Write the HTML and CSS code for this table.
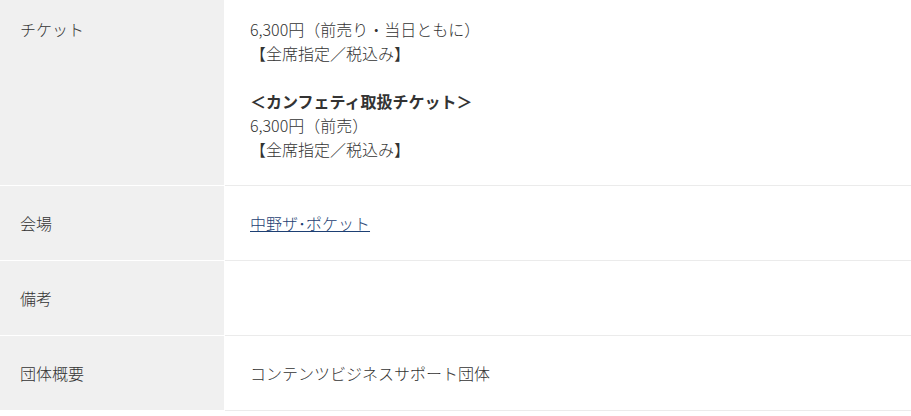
FILE: index.html
```html
<!DOCTYPE html>
<html lang="ja">
<head>
<meta charset="utf-8">
<link rel="stylesheet" href="styles.css">
</head>
<body>
<table class="info">
  <tr class="first">
    <th>チケット</th>
    <td>6,300円（前売り・当日ともに）<br>【全席指定／税込み】<br><br><strong>＜カンフェティ取扱チケット＞</strong><br>6,300円（前売）<br>【全席指定／税込み】</td>
  </tr>
  <tr>
    <th>会場</th>
    <td><a href="#">中野ザ･ポケット</a></td>
  </tr>
  <tr>
    <th>備考</th>
    <td></td>
  </tr>
  <tr>
    <th>団体概要</th>
    <td>コンテンツビジネスサポート団体</td>
  </tr>
</table>
</body>
</html>
```
FILE: styles.css
```css
html, body {
  margin: 0;
  padding: 0;
  background: #fff;
}
body {
  font-family: "Noto Sans CJK JP", "Noto Sans", sans-serif;
  font-size: 16px;
  line-height: 24px;
  font-weight: 300;
  color: #333;
}
.info {
  width: 100%;
  border-collapse: separate;
  border-spacing: 0;
}
.info th {
  width: 204px;
  background: #f0f0f0;
  font-weight: 300;
  text-align: left;
  vertical-align: top;
  padding: 25px 0 25px 20px;
  border-bottom: 1px solid #fff;
  border-right: 1px solid #fff;
}
.info td {
  vertical-align: top;
  padding: 25px 25px 25px 25px;
  height: 24px;
  border-bottom: 1px solid #ebebeb;
}
.info .first th,
.info .first td {
  padding-top: 17px;
  padding-bottom: 24px;
}
.info a {
  color: #1d3f73;
  text-decoration: underline;
}
.info strong {
  font-weight: bold;
}
```
